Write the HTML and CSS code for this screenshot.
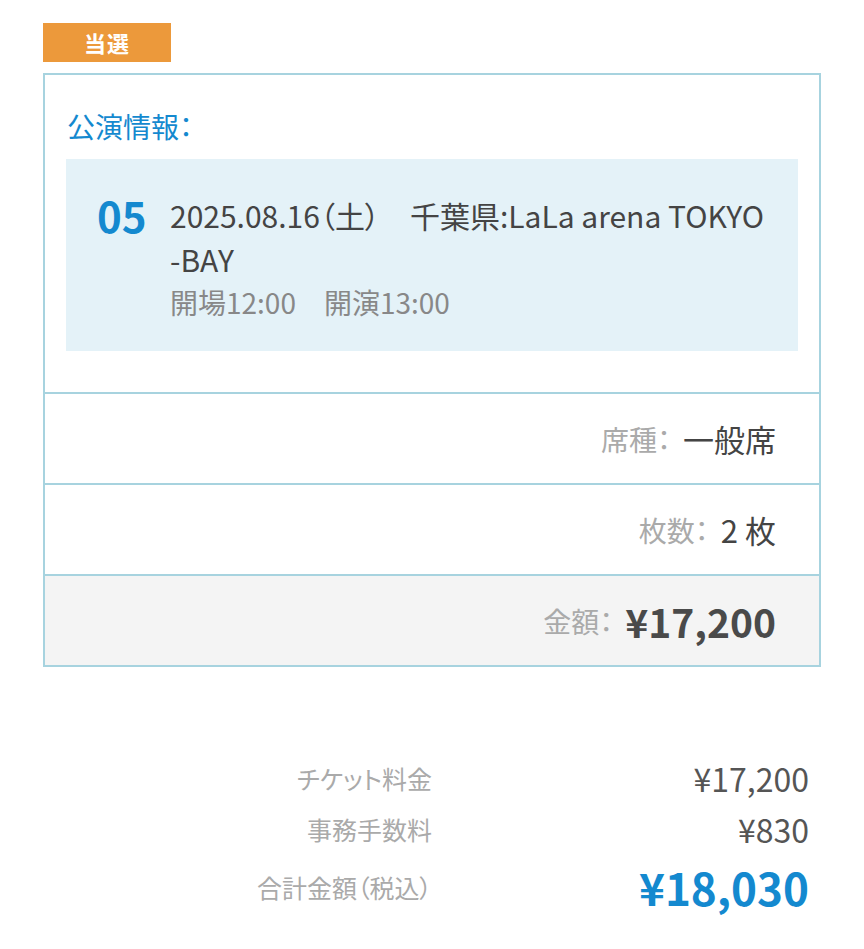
FILE: index.html
```html
<!DOCTYPE html>
<html lang="ja">
<head>
  <meta charset="UTF-8">
  <meta name="viewport" content="width=device-width, initial-scale=1.0">
  <title>当選</title>
  <link rel="stylesheet" href="styles.css">
</head>
<body>
  <div class="result">
    <div class="badge">当選</div>
    <div class="card">
      <div class="perf">
        <h2 class="perf-title">公演情報：</h2>
        <div class="perf-box">
          <div class="perf-no">05</div>
          <div class="perf-detail">
            <p class="perf-place">2025.08.16（土）　千葉県:LaLa arena TOKYO <span class="nowrap">-BAY</span></p>
            <p class="perf-time">開場12:00　開演13:00</p>
          </div>
        </div>
      </div>
      <div class="row"><span class="label">席種：</span><span class="value">一般席</span></div>
      <div class="row"><span class="label">枚数：</span><span class="value">2 枚</span></div>
      <div class="row total"><span class="label">金額：</span><span class="value">¥17,200</span></div>
    </div>
  </div>
  <div class="summary">
    <span class="sum-label">チケット料金</span><span class="sum-value">¥17,200</span>
    <span class="sum-label">事務手数料</span><span class="sum-value">¥830</span>
    <span class="sum-label">合計金額（税込）</span><span class="sum-value grand">¥18,030</span>
  </div>
</body>
</html>
```

FILE: styles.css
```css
body {
  font-family: "Noto Sans CJK JP", "Noto Sans", sans-serif;
  font-feature-settings: "palt";
  margin: 0;
  padding: 0;
  background-color: #fff;
  color: #444;
}
.nowrap {
  white-space: nowrap;
}
.result {
  width: 778px;
  margin: 23px 0 0 43px;
}
.badge {
  width: 128px;
  height: 39px;
  line-height: 39px;
  background-color: #ec993b;
  color: #fff;
  font-size: 22px;
  font-weight: bold;
  letter-spacing: 1px;
  text-align: center;
}
.card {
  margin-top: 11px;
  border: 2px solid #a7d3df;
}
.perf {
  padding: 32px 21px 41px 21px;
  border-bottom: 2px solid #a7d3df;
}
.perf-title {
  margin: 0 0 14px 1px;
  font-size: 28px;
  font-weight: normal;
  line-height: 38px;
  color: #1489cf;
}
.perf-box {
  display: flex;
  background-color: #e4f2f8;
  padding: 34px 28px 28px 31px;
}
.perf-no {
  width: 73px;
  flex-shrink: 0;
  font-size: 42px;
  font-weight: bold;
  line-height: 44px;
  color: #1489cf;
}
.perf-detail p {
  margin: 0;
}
.perf-place {
  font-size: 30px;
  line-height: 44px;
  color: #444;
}
.perf-time {
  font-size: 28px;
  line-height: 42px;
  color: #888;
}
.row {
  display: flex;
  justify-content: flex-end;
  align-items: center;
  height: 89px;
  padding-right: 43px;
  border-bottom: 2px solid #a7d3df;
}
.row:last-child {
  border-bottom: none;
}
.row .label {
  font-size: 28px;
  color: #aaa;
  margin-right: 12px;
}
.row .value {
  font-size: 31px;
  color: #444;
}
.row.total {
  background-color: #f4f4f4;
}
.row.total .value {
  font-size: 39px;
  font-weight: bold;
  color: #4a4a4a;
}
.summary {
  display: grid;
  grid-template-columns: 432px 377px;
  align-items: center;
  margin-top: 88px;
  row-gap: 5px;
}
.sum-label {
  text-align: right;
  font-size: 25px;
  color: #aaa;
  line-height: 46px;
}
.sum-value {
  text-align: right;
  font-size: 32px;
  color: #555;
  line-height: 46px;
}
.sum-value.grand {
  font-size: 44px;
  font-weight: bold;
  color: #1489cf;
  line-height: 60px;
}
```
